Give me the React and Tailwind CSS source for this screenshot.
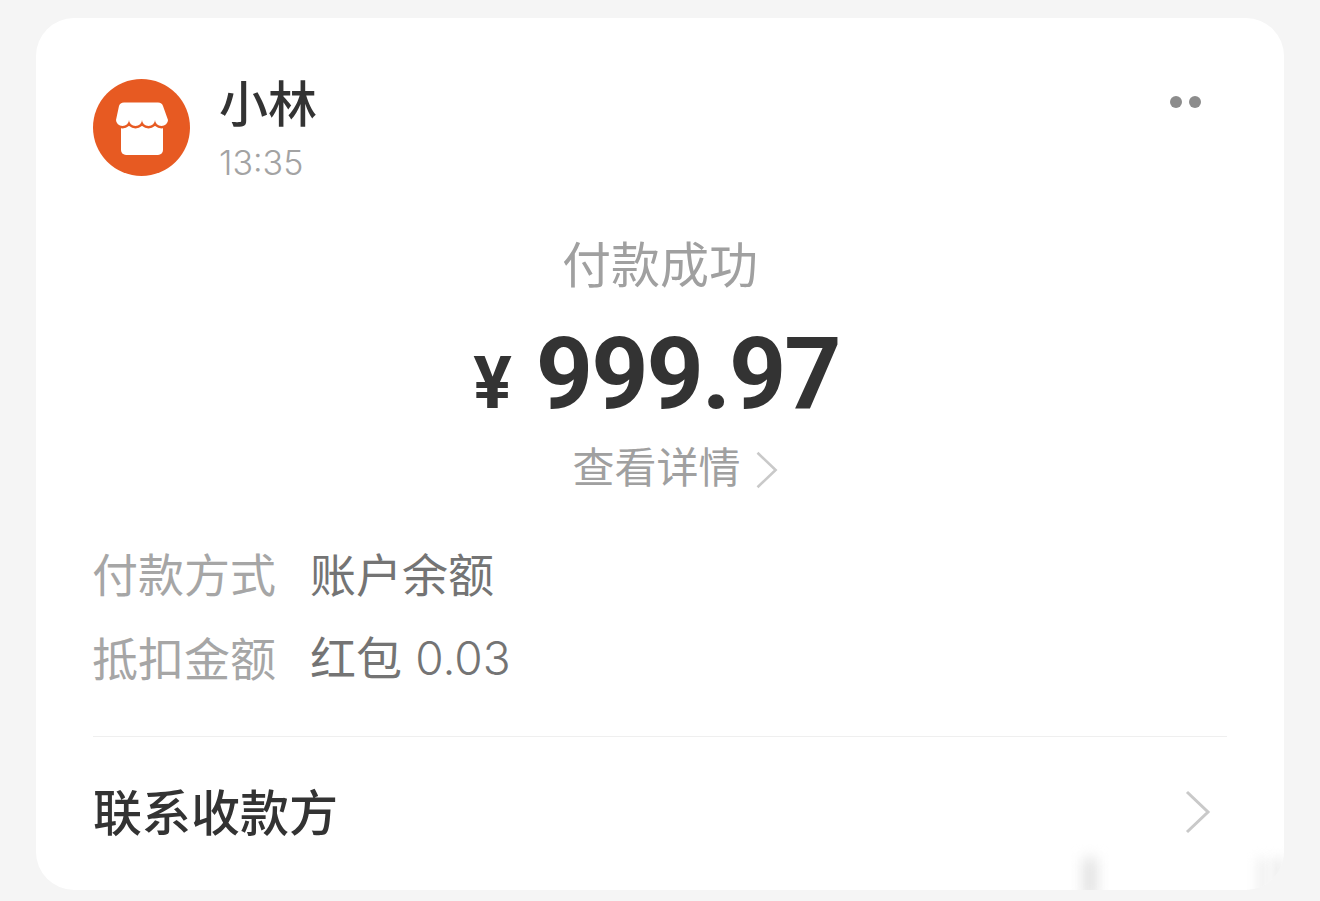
const cjk = { fontFamily: '"Noto Sans CJK SC", "Noto Sans", sans-serif' }
const num = { fontFamily: 'Roboto, sans-serif' }
const thin = { fontFamily: 'Inter, sans-serif', fontWeight: 300 }

const Chevron = ({ className }) => (
  <svg className={className} viewBox="0 0 26 44" fill="none" stroke="#c9c9c9" strokeWidth={3}>
    <path d="M2 2l21 20L2 42" />
  </svg>
)

const roof = 'M31 23.500h34q4 0 5 3.500L75 41a6.500 6 0 0 1-13 0a6.500 6 0 0 1-13 0a6.500 6 0 0 1-13 0a6.500 6 0 0 1-13 0L26 27q1-3.500 5-3.500z'

const Avatar = () => (
  <svg className="w-[97px] h-[97px] shrink-0" viewBox="0 0 97 97">
    <circle cx="48.500" cy="48.500" r="48.500" fill="#e75a22" />
    <rect x="28" y="40" width="42" height="36" rx="5" fill="#fff" />
    <path d={roof} fill="#fff" stroke="#e75a22" strokeWidth="5" />
    <path d={roof} fill="#fff" />
  </svg>
)

const Row = ({ label, value }) => (
  <div className="flex items-center h-[84px] -ml-[1px] text-[46px] leading-none">
    <span className="w-[218px] text-[#a6a6a6]">{label}</span>
    <span className="text-[#747474]">{value}</span>
  </div>
)

export default function App() {
  return (
    <div className="w-[1320px] h-[901px] bg-[#f5f5f5] pt-[18px] px-[36px] overflow-hidden" style={cjk}>
      <div className="relative h-[872px] bg-white rounded-[38px] px-[57px] pt-[61px]">
        <div className="flex items-start">
          <Avatar />
          <div className="ml-[29px] flex flex-col">
            <span className="text-[49px] leading-[52px] -mt-[4px] font-medium text-[#333]">小林</span>
            <span className="text-[34px] leading-[40px] mt-[16px] text-[#a3a3a3]" style={thin}>13:35</span>
          </div>
          <div className="ml-auto mr-[26px] mt-[17px] flex gap-[7px]">
            <span className="w-[12px] h-[12px] rounded-full bg-[#8c8c8c]" />
            <span className="w-[12px] h-[12px] rounded-full bg-[#8c8c8c]" />
          </div>
        </div>

        <div className="flex flex-col items-center mt-[51px]">
          <div className="text-[49px] leading-[56px] text-[#a0a0a0]">付款成功</div>
          <div className="flex items-baseline mt-[34px] mr-[7px] h-[100px] text-[#333]">
            <span className="text-[72px] leading-[100px] font-bold mr-[24px]" style={num}>¥</span>
            <span className="text-[100px] leading-[100px] font-bold tracking-[-2px]" style={num}>999.97</span>
          </div>
          <div className="flex items-center mt-[16px] ml-[31px]">
            <span className="text-[42px] leading-[50px] text-[#a0a0a0]">查看详情</span>
            <Chevron className="w-[24px] h-[38px] ml-[14px] mt-[9px]" />
          </div>
        </div>

        <div className="mt-[40px]">
          <Row label="付款方式" value="账户余额" />
          <Row label="抵扣金额" value={<>红包 <span className="ml-[3px]" style={thin}>0.03</span></>} />
        </div>

        <div className="h-px bg-[#efefef] mt-[38px]" />

        <div className="flex items-center justify-between h-[150px]">
          <span className="text-[49px] leading-none font-medium text-[#333] mb-[6px]">联系收款方</span>
          <Chevron className="w-[26px] h-[44px] mr-[16px]" />
        </div>

        <div className="absolute inset-x-0 bottom-0 h-[46px] rounded-b-[38px] overflow-hidden pointer-events-none">
          <span className="absolute left-[1048px] -bottom-[8px] w-[12px] h-[40px] bg-[#dcdcdc] blur-[7px]" />
          <span className="absolute left-[1222px] -bottom-[8px] w-[8px] h-[40px] bg-[#ececec] blur-[6px]" />
          <span className="absolute left-[1238px] -bottom-[8px] w-[8px] h-[40px] bg-[#e6e6e6] blur-[6px]" />
        </div>
      </div>
    </div>
  )
}
